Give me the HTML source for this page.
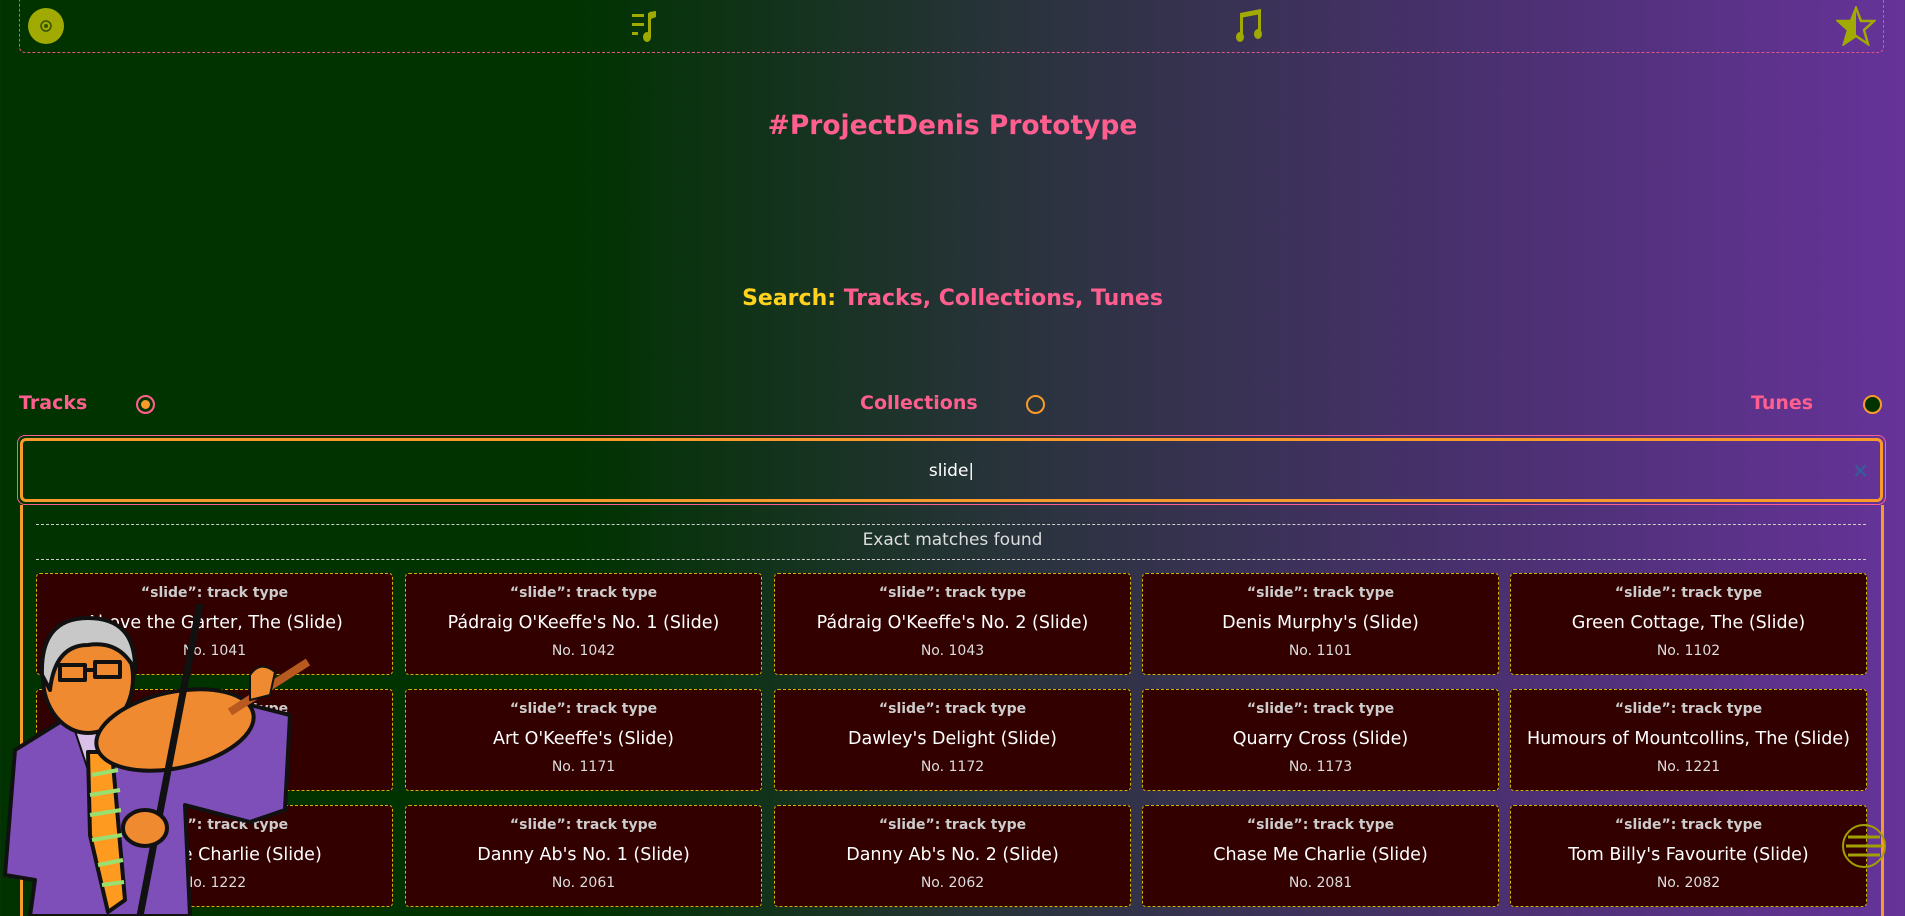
<!DOCTYPE html>
<html><head><meta charset="utf-8"><style>
*{box-sizing:border-box;margin:0;padding:0}
html,body{width:1905px;height:916px;overflow:hidden}
body{background:linear-gradient(to right,#003300 0%,#003300 30%,#2c3340 55%,#4a3070 78%,#663399 100%);font-family:"DejaVu Sans","Liberation Sans",sans-serif;position:relative;color:#fff}
.nav{position:absolute;left:19px;top:-4px;width:1865px;height:57px;border:1px dashed #e05585;border-top:none;border-radius:0 0 6px 6px}
.abs{position:absolute}
h1{position:absolute;top:110px;width:100%;text-align:center;font-size:26.5px;color:#ff5e8e;font-weight:bold}
.sh{position:absolute;top:286px;width:100%;text-align:center;font-size:22px;font-weight:bold;color:#ff5e8e}
.sh span{color:#ffd21f}
.rl{position:absolute;top:392px;font-size:19px;font-weight:bold;color:#ff5e8e}
.radio{position:absolute;top:395px;width:19px;height:19px;border-radius:50%;border:2px solid #f99a2a;background:#003300}
.inp{position:absolute;left:17px;top:435px;width:1869px;height:70px;border:1px solid #ff5e8e;border-radius:8px;padding:2px}
.inp div{width:100%;height:100%;border:3px solid #f99a2a;border-radius:6px;text-align:center;line-height:60px;font-size:17px}
.panel{position:absolute;left:20px;top:505px;width:1864px;height:420px;border-left:3px solid #f99a2a;border-right:3px solid #f99a2a}
.dl{position:absolute;left:36px;width:1830px;border-top:1px dashed #ccc}
.em{position:absolute;top:530px;width:100%;text-align:center;font-size:17px;color:#ddd}
.card{position:absolute;width:357px;height:102px;background:#330000;border:1px dashed #c8b800;border-radius:4px;text-align:center}
.card .a{margin-top:11px;font-size:14px;font-weight:bold;color:#ccc}
.card .b{margin-top:12px;font-size:17.5px;color:#fff}
.card .c{margin-top:10px;font-size:14px;color:#ddd}
</style></head><body>
<div class="nav"></div>
<svg class="abs" style="left:27px;top:7px" width="38" height="38"><ellipse cx="19" cy="19" rx="18" ry="18" fill="#a0aa00"/><circle cx="19" cy="19" r="5" fill="none" stroke="#335500" stroke-width="1.5"/><circle cx="19" cy="19" r="2" fill="#335500"/></svg>
<svg class="abs" style="left:630px;top:9px" width="40" height="34"><g fill="#a0aa00"><rect x="2" y="5" width="12" height="3"/><rect x="2" y="14" width="12" height="3"/><rect x="2" y="23" width="6" height="3"/><rect x="18" y="4" width="3" height="24"/><path d="M19 3 L26 2 L26 8 L21 10Z"/><ellipse cx="17" cy="28" rx="4" ry="5"/></g></svg>
<svg class="abs" style="left:1235px;top:8px" width="36" height="36"><g fill="#a0aa00"><rect x="5" y="5" width="3" height="24"/><rect x="23" y="2" width="3" height="24"/><path d="M5 5 L26 1 L26 6 L5 10Z"/><ellipse cx="5" cy="29" rx="4" ry="5"/><ellipse cx="23" cy="26" rx="4" ry="5"/></g></svg>
<svg class="abs" style="left:1836px;top:6px" width="40" height="40"><path d="M20 2 L25 15 L38 15 L28 24 L32 38 L20 30 L8 38 L12 24 L2 15 L15 15Z" fill="none" stroke="#a0aa00" stroke-width="2.5"/><path d="M20 2 L15 15 L2 15 L12 24 L8 38 L20 30Z" fill="#a0aa00"/></svg>
<h1>#ProjectDenis Prototype</h1>
<div class="sh"><span>Search:</span> Tracks, Collections, Tunes</div>
<div class="rl" style="left:19px">Tracks</div>
<div class="radio" style="left:136px;border-color:#ff5e8e;background:#f99a2a;box-shadow:inset 0 0 0 3px #003300"></div>
<div class="rl" style="left:860px">Collections</div>
<div class="radio" style="left:1026px;background:#2a3338"></div>
<div class="rl" style="left:1751px">Tunes</div>
<div class="radio" style="left:1863px"></div>
<div class="inp"><div>slide|</div></div>
<div class="abs" style="left:1852px;top:458px;color:#3a5a9a;font-size:20px;font-weight:bold">×</div>
<div class="panel"></div>
<div class="dl" style="top:524px"></div>
<div class="em">Exact matches found</div>
<div class="dl" style="top:559px"></div>
<div class="card" style="left:36px;top:573px"><div class="a">“slide”: track type</div><div class="b">Above the Garter, The (Slide)</div><div class="c">No. 1041</div></div>
<div class="card" style="left:405px;top:573px"><div class="a">“slide”: track type</div><div class="b">Pádraig O'Keeffe's No. 1 (Slide)</div><div class="c">No. 1042</div></div>
<div class="card" style="left:774px;top:573px"><div class="a">“slide”: track type</div><div class="b">Pádraig O'Keeffe's No. 2 (Slide)</div><div class="c">No. 1043</div></div>
<div class="card" style="left:1142px;top:573px"><div class="a">“slide”: track type</div><div class="b">Denis Murphy's (Slide)</div><div class="c">No. 1101</div></div>
<div class="card" style="left:1510px;top:573px"><div class="a">“slide”: track type</div><div class="b">Green Cottage, The (Slide)</div><div class="c">No. 1102</div></div>
<div class="card" style="left:36px;top:689px"><div class="a">“slide”: track type</div><div class="b">Slide (Slide)</div><div class="c">No. 1170</div></div>
<div class="card" style="left:405px;top:689px"><div class="a">“slide”: track type</div><div class="b">Art O'Keeffe's (Slide)</div><div class="c">No. 1171</div></div>
<div class="card" style="left:774px;top:689px"><div class="a">“slide”: track type</div><div class="b">Dawley's Delight (Slide)</div><div class="c">No. 1172</div></div>
<div class="card" style="left:1142px;top:689px"><div class="a">“slide”: track type</div><div class="b">Quarry Cross (Slide)</div><div class="c">No. 1173</div></div>
<div class="card" style="left:1510px;top:689px"><div class="a">“slide”: track type</div><div class="b">Humours of Mountcollins, The (Slide)</div><div class="c">No. 1221</div></div>
<div class="card" style="left:36px;top:805px"><div class="a">“slide”: track type</div><div class="b">Chase Me Charlie (Slide)</div><div class="c">No. 1222</div></div>
<div class="card" style="left:405px;top:805px"><div class="a">“slide”: track type</div><div class="b">Danny Ab's No. 1 (Slide)</div><div class="c">No. 2061</div></div>
<div class="card" style="left:774px;top:805px"><div class="a">“slide”: track type</div><div class="b">Danny Ab's No. 2 (Slide)</div><div class="c">No. 2062</div></div>
<div class="card" style="left:1142px;top:805px"><div class="a">“slide”: track type</div><div class="b">Chase Me Charlie (Slide)</div><div class="c">No. 2081</div></div>
<div class="card" style="left:1510px;top:805px"><div class="a">“slide”: track type</div><div class="b">Tom Billy's Favourite (Slide)</div><div class="c">No. 2082</div></div>
<svg class="abs" style="left:1840px;top:822px" width="48" height="48"><circle cx="24" cy="24" r="21" fill="none" stroke="#a0a000" stroke-width="2"/><g stroke="#a0a000" stroke-width="3"><line x1="8" y1="15" x2="40" y2="15"/><line x1="6" y1="24" x2="42" y2="24"/><line x1="8" y1="33" x2="40" y2="33"/></g></svg>
<svg class="abs" style="left:0;top:600px" width="330" height="316">
<g stroke="#111" stroke-width="4" stroke-linejoin="round">
<path d="M5 275 L15 150 L60 122 L110 118 L150 150 L250 105 L290 115 L285 210 L250 222 L185 205 L190 316 L30 316 L35 280Z" fill="#7e4fb8"/>
<path d="M72 122 L100 118 L105 160 L88 170Z" fill="#d8c0e8" stroke-width="2"/>
<path d="M88 152 L112 152 L125 300 L108 312 L90 235Z" fill="#ff9a20"/>
<path d="M92 175 L118 170 M90 195 L120 190 M90 215 L121 210 M92 240 L122 235 M98 265 L123 260 M102 285 L124 282" stroke="#9ae070" stroke-width="4"/>
<ellipse cx="88" cy="78" rx="45" ry="55" fill="#f08a30"/>
<path d="M42 75 Q40 18 88 18 Q136 18 135 70 Q120 40 88 45 Q55 45 50 90Z" fill="#c8c8c8"/>
<path d="M60 65 h25 v15 h-25Z M95 62 h25 v15 h-25Z M85 70 h10" fill="none" stroke-width="4"/>
<ellipse cx="175" cy="130" rx="80" ry="38" fill="#f08a30" transform="rotate(-12 175 130)"/>
<line x1="230" y1="112" x2="308" y2="62" stroke-width="8" stroke="#b85a20"/>
<path d="M250 75 Q260 60 275 72 L270 95 L250 100Z" fill="#f08a30" stroke-width="2"/>
<line x1="200" y1="4" x2="140" y2="316" stroke-width="7"/>
<ellipse cx="145" cy="228" rx="22" ry="18" fill="#f08a30"/>
</g>
</svg>
</body></html>
